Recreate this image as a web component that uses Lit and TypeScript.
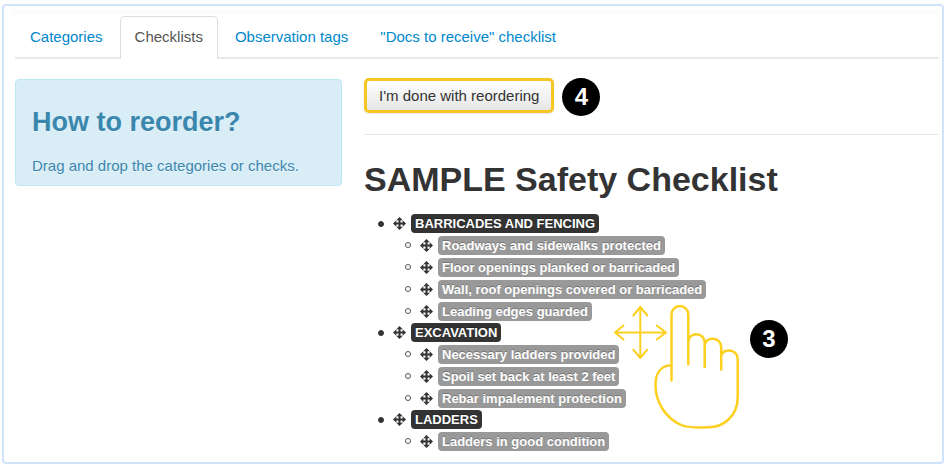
import { LitElement, html, css, svg } from "lit";
import { customElement } from "lit/decorators.js";

interface Category {
  name: string;
  checks: string[];
}

const CATEGORIES: Category[] = [
  {
    name: "BARRICADES AND FENCING",
    checks: [
      "Roadways and sidewalks protected",
      "Floor openings planked or barricaded",
      "Wall, roof openings covered or barricaded",
      "Leading edges guarded",
    ],
  },
  {
    name: "EXCAVATION",
    checks: [
      "Necessary ladders provided",
      "Spoil set back at least 2 feet",
      "Rebar impalement protection",
    ],
  },
  { name: "LADDERS", checks: ["Ladders in good condition"] },
];

const TABS = ["Categories", "Checklists", "Observation tags", "\"Docs to receive\" checklist"];

const moveShape = svg`<path d="M7 0 L10.5 3.6 H8.1 V5.9 H10.4 V3.5 L14 7 L10.4 10.5 V8.1 H8.1 V10.4 H10.5 L7 14 L3.5 10.4 H5.9 V8.1 H3.6 V10.5 L0 7 L3.6 3.5 V5.9 H5.9 V3.6 H3.5 Z"/>`;

@customElement("app-root")
export class AppRoot extends LitElement {
  static styles = css`
    :host {
      display: block;
      box-sizing: border-box;
      padding: 4px 4px 3px 2px;
      font-family: "Liberation Sans", Arial, sans-serif;
      font-size: 15px;
      line-height: 20px;
      color: #333;
      background: #fff;
    }
    * {
      box-sizing: border-box;
    }
    .frame {
      border: 2px solid #d0e3fb;
      border-radius: 4px;
      padding: 4px 3px 10px 8px;
    }
    .page {
      padding: 6px 0 0 3px;
      background: linear-gradient(#f9fafc, #fff) top / 100% 8px no-repeat;
    }
    .tabs {
      display: flex;
      gap: 2px;
      border-bottom: 2px solid #e8e8e8;
    }
    .tab {
      padding: 10px 14px;
      border: 1px solid transparent;
      border-bottom: 0;
      border-radius: 5px 5px 0 0;
      color: #08c;
      text-decoration: none;
    }
    .tab.active {
      margin-bottom: -2px;
      border-color: #ddd;
      background: #fff;
      color: #555;
    }
    .columns {
      display: grid;
      grid-template-columns: 327fr 575fr;
      gap: 22px;
      align-items: start;
      padding-top: 19px;
    }
    .help {
      margin-top: 1px;
      padding: 22px 16px 9px;
      border: 1px solid #bce8f1;
      border-radius: 4px;
      background: #d9edf7;
      color: #3a87ad;
      text-shadow: 0 1px 0 rgba(255, 255, 255, 0.5);
    }
    .help h2 {
      margin: 0 0 14px;
      font-size: 27px;
      line-height: 40px;
    }
    .help p {
      margin: 0;
    }
    .actions {
      display: flex;
      align-items: flex-start;
      gap: 8px;
      padding-bottom: 18px;
      border-bottom: 1px solid #e8e8e8;
    }
    .done {
      height: 35px;
      padding: 0 12px;
      border: 3px solid #f6c622;
      border-radius: 5px;
      background: linear-gradient(#fff, #e6e6e6);
      box-shadow: 0 1px 2px rgba(0, 0, 0, 0.1);
      color: #333;
      font: inherit;
    }
    .badge {
      display: grid;
      place-items: center;
      width: 38px;
      height: 38px;
      border-radius: 50%;
      background: #000;
      color: #fff;
      font-size: 24px;
      font-weight: bold;
    }
    h1 {
      margin: 23px 0 12px;
      font-size: 34px;
      line-height: 43px;
    }
    .board {
      position: relative;
    }
    ul {
      margin: 0;
      padding: 0 0 0 14px;
      list-style: none;
    }
    ul ul {
      padding-left: 27px;
    }
    .row {
      display: flex;
      align-items: center;
      height: 22px;
    }
    .row.category {
      height: 21px;
    }
    .dot {
      width: 6px;
      height: 6px;
      margin-right: 9px;
      border: 1px solid #555;
      border-radius: 50%;
    }
    .category .dot {
      border-color: #333;
      background: #333;
    }
    .move {
      width: 13px;
      height: 13px;
      margin-right: 5px;
      fill: #333;
      cursor: move;
    }
    .label {
      padding: 0 4px;
      border-radius: 4px;
      background: #999;
      color: #fff;
      font-size: 13px;
      font-weight: bold;
      line-height: 19px;
      white-space: nowrap;
      text-shadow: 0 -1px 0 rgba(0, 0, 0, 0.25);
    }
    .category .label {
      background: #333;
    }
    .gesture {
      position: absolute;
      left: 246px;
      top: 89px;
      fill: none;
      stroke: #fdd020;
      stroke-width: 2;
      stroke-linecap: round;
      stroke-linejoin: round;
    }
    .hand {
      stroke-width: 2.5;
    }
    .step {
      position: absolute;
      left: 386px;
      top: 107px;
    }
  `;

  private row(name: string, kind: string) {
    return html`<div class="row ${kind}"
      ><span class="dot"></span
      ><svg class="move" viewBox="0 0 14 14" aria-hidden="true">${moveShape}</svg
      ><span class="label">${name}</span
    ></div>`;
  }

  render() {
    return html`
      <div class="frame">
        <div class="page">
          <nav class="tabs">
            ${TABS.map((t, i) => html`<a class="tab ${i === 1 ? "active" : ""}" href="#">${t}</a>`)}
          </nav>
          <div class="columns">
            <aside class="help">
              <h2>How to reorder?</h2>
              <p>Drag and drop the categories or checks.</p>
            </aside>
            <main>
              <div class="actions">
                <button class="done" type="button">I'm done with reordering</button>
                <span class="badge">4</span>
              </div>
              <h1>SAMPLE Safety Checklist</h1>
              <div class="board">
                <ul>
                  ${CATEGORIES.map(
                    (c) => html`<li>
                      ${this.row(c.name, "category")}
                      <ul>
                        ${c.checks.map((k) => html`<li>${this.row(k, "check")}</li>`)}
                      </ul>
                    </li>`
                  )}
                </ul>
                <svg class="gesture" width="132" height="130" viewBox="0 0 132 130" aria-hidden="true">
                  <path d="M30.3 5V56M23.3 13.5L30.3 5L37.3 13.5M23.3 47.7L30.3 56L37.3 47.7M5 30.5H56M13.5 23.5L5 30.5L13.5 37.5M46.7 23.5L56 30.5L46.7 37.5" />
                  <path class="hand" d="M61.5 78.5V12.5A8.4 8.4 0 0 1 78.3 12.5V62.3M78.3 39.5C78.8 35 82 32.2 86.5 32.2C91 32.2 94.7 36 94.7 41V65M94.7 43C95.5 39 99 36.8 103 36.8C107.5 36.8 111.2 40.5 111.2 45V67.5M111.2 54C112 50.5 115 48.5 119 48.5C124 48.5 127.7 52 127.7 57V95C127.7 114 114 125.3 98 125.3C92 125.6 77 126 70 122.5C57 116 45.5 102 45.5 83C45.5 71 51 63.5 61.4 63.3" />
                </svg>
                <span class="badge step">3</span>
              </div>
            </main>
          </div>
        </div>
      </div>
    `;
  }
}
